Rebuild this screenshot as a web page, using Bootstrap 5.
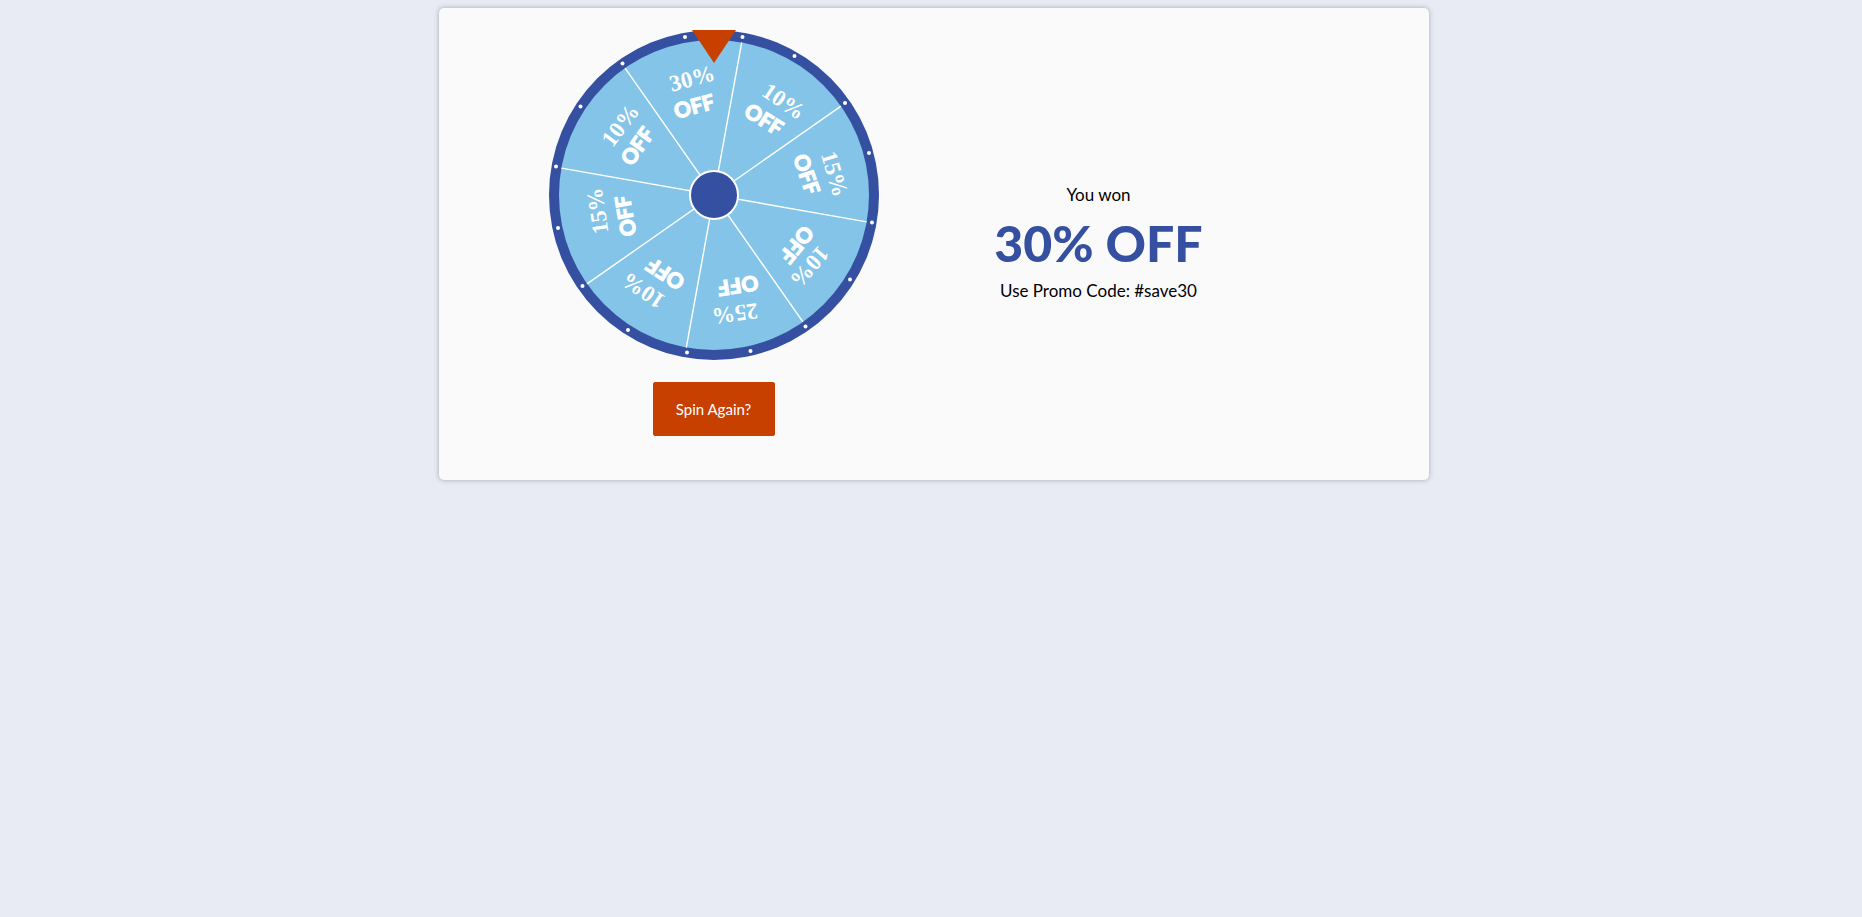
<!DOCTYPE html>
<html lang="en">
<head>
<meta charset="utf-8">
<meta name="viewport" content="width=device-width, initial-scale=1">
<title>Spin to win</title>
<link href="https://cdn.jsdelivr.net/npm/bootstrap@5.3.0/dist/css/bootstrap.min.css" rel="stylesheet">
<style>
body { background: #e8ebf4; color: #000; font-family: Lato, sans-serif; font-size: 17px; line-height: 24px; }
.page-wrap { padding: 8px 0 8px 6px; }
.prize-panel { max-width: 990px; background: #fafafa; border-radius: 5px; box-shadow: 0 0 5px rgba(60, 65, 90, .4); padding: 22px 138px 44px 82px; }
.wheel { width: 330px; max-width: 100%; height: auto; }
.wheel .amount { font: bold 23px "Liberation Serif", serif; }
.wheel .word { font: 900 21px Lato, sans-serif; stroke: #fff; stroke-width: 1px; }
.btn-spin { --bs-btn-color: #fff; --bs-btn-bg: #c84000; --bs-btn-border-color: #c84000; --bs-btn-hover-color: #fff; --bs-btn-hover-bg: #a93600; --bs-btn-hover-border-color: #a93600; --bs-btn-border-radius: 2px; --bs-btn-font-size: 15px; --bs-btn-line-height: 20px; width: 122px; height: 54px; margin-top: 22px; }
.result { padding-top: 20px; }
.prize { color: #3550a0; font-size: 50px; line-height: 56px; font-weight: 900; }
@media (max-width: 767px) { .prize-panel { padding: 22px 16px; } }
</style>
</head>
<body>
<div class="page-wrap">
<main class="prize-panel mx-auto">
  <div class="row g-0 align-items-center">
    <div class="col-md-6 d-flex flex-column align-items-center">
      <svg class="wheel d-block" viewBox="-165 -165 330 330" role="img" aria-label="Prize wheel">
        <circle r="165" fill="#3550a0"/>
        <circle r="155" fill="#84c4e8"/>
        <g stroke="#fff" stroke-width="1.4">
          <path transform="rotate(10.3)" d="M0-155V155"/>
          <path transform="rotate(55)" d="M0-155V155"/>
          <path transform="rotate(100)" d="M0-155V155"/>
          <path transform="rotate(145)" d="M0-155V155"/>
        </g>
        <circle r="24" fill="#3550a0" stroke="#fff" stroke-width="2"/>
        <g fill="#fff">
          <circle cx="-29" cy="-158" r="2"/><circle cx="-91.500" cy="-131.500" r="2"/><circle cx="-133.500" cy="-88.500" r="2"/><circle cx="-158" cy="-28.500" r="2"/>
          <circle cx="28.500" cy="-158" r="2"/><circle cx="80.500" cy="-139" r="2"/><circle cx="131" cy="-92" r="2"/><circle cx="155" cy="-42" r="2"/>
          <circle cx="-156" cy="33" r="2"/><circle cx="-131.500" cy="91" r="2"/><circle cx="-86" cy="135" r="2"/><circle cx="-27" cy="157.500" r="2"/>
          <circle cx="158" cy="27.500" r="2"/><circle cx="136" cy="84.500" r="2"/><circle cx="91.500" cy="131.500" r="2"/><circle cx="36.500" cy="156" r="2"/>
        </g>
        <g fill="#fff" text-anchor="middle">
          <text class="amount" transform="translate(-22 -117) rotate(-15)" y="8">30%</text><text class="word" transform="translate(-20 -89) rotate(-15)" y="8">OFF</text>
          <text class="amount" transform="translate(70 -94) rotate(34)" y="8">10%</text><text class="word" transform="translate(50 -76) rotate(32)" y="8">OFF</text>
          <text class="amount" transform="translate(121 -21) rotate(73)" y="8">15%</text><text class="word" transform="translate(93 -21) rotate(71)" y="8">OFF</text>
          <text class="amount" transform="translate(96 72) rotate(131)" y="8">10%</text><text class="word" transform="translate(83 50) rotate(129)" y="8">OFF</text>
          <text class="amount" transform="translate(21 119) rotate(172)" y="8">25%</text><text class="word" transform="translate(24 91) rotate(171)" y="8">OFF</text>
          <text class="amount" transform="translate(-71 96) rotate(214)" y="8">10%</text><text class="word" transform="translate(-49 79) rotate(213)" y="8">OFF</text>
          <text class="amount" transform="translate(-117 16) rotate(261)" y="8">15%</text><text class="word" transform="translate(-89 21) rotate(260)" y="8">OFF</text>
          <text class="amount" transform="translate(-94 -70) rotate(307)" y="8">10%</text><text class="word" transform="translate(-77 -49) rotate(305)" y="8">OFF</text>
        </g>
        <path d="M-22-165H22L0-132Z" fill="#c84000"/>
      </svg>
      <button type="button" class="btn btn-spin p-0">Spin Again?</button>
    </div>
    <div class="result col-md-6 text-center">
      <p class="mb-2">You won</p>
      <h1 class="prize mb-2">30% OFF</h1>
      <p class="mb-0">Use Promo Code: #save30</p>
    </div>
  </div>
</main>
</div>
<script src="https://cdn.jsdelivr.net/npm/bootstrap@5.3.0/dist/js/bootstrap.bundle.min.js"></script>
</body>
</html>
